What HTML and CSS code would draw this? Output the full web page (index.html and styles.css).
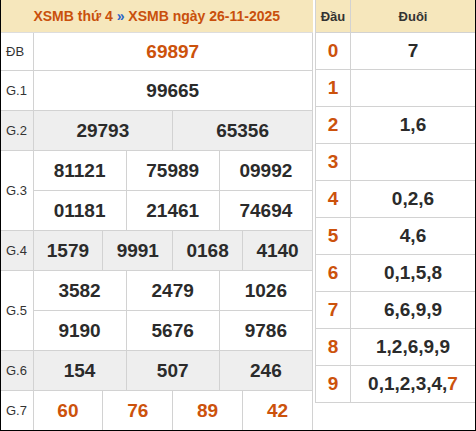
FILE: index.html
```html
<!DOCTYPE html>
<html>
<head>
<meta charset="utf-8">
<link rel="stylesheet" href="styles.css">
</head>
<body>
<div class="page">
  <table class="kq">
    <colgroup>
      <col class="c-label">
      <col><col><col><col><col><col><col><col><col><col><col><col>
    </colgroup>
    <tr class="head"><th colspan="13"><span class="t">XSMB thứ 4</span> <span class="sep">»</span> <span class="t">XSMB ngày 26-11-2025</span></th></tr>
    <tr class="r-db"><td class="lb">ĐB</td><td colspan="12" class="num red">69897</td></tr>
    <tr><td class="lb">G.1</td><td colspan="12" class="num">99665</td></tr>
    <tr class="gray"><td class="lb">G.2</td><td colspan="6" class="num">29793</td><td colspan="6" class="num">65356</td></tr>
    <tr><td class="lb" rowspan="2">G.3</td><td colspan="4" class="num">81121</td><td colspan="4" class="num">75989</td><td colspan="4" class="num">09992</td></tr>
    <tr><td colspan="4" class="num">01181</td><td colspan="4" class="num">21461</td><td colspan="4" class="num">74694</td></tr>
    <tr class="gray"><td class="lb">G.4</td><td colspan="3" class="num">1579</td><td colspan="3" class="num">9991</td><td colspan="3" class="num">0168</td><td colspan="3" class="num">4140</td></tr>
    <tr><td class="lb" rowspan="2">G.5</td><td colspan="4" class="num">3582</td><td colspan="4" class="num">2479</td><td colspan="4" class="num">1026</td></tr>
    <tr><td colspan="4" class="num">9190</td><td colspan="4" class="num">5676</td><td colspan="4" class="num">9786</td></tr>
    <tr class="gray"><td class="lb">G.6</td><td colspan="4" class="num">154</td><td colspan="4" class="num">507</td><td colspan="4" class="num">246</td></tr>
    <tr><td class="lb">G.7</td><td colspan="3" class="num red">60</td><td colspan="3" class="num red">76</td><td colspan="3" class="num red">89</td><td colspan="3" class="num red">42</td></tr>
  </table>
  <table class="loto">
    <colgroup><col class="c-dau"><col></colgroup>
    <tr class="head"><th>Đầu</th><th>Đuôi</th></tr>
    <tr><td class="dau">0</td><td class="duoi">7</td></tr>
    <tr><td class="dau">1</td><td class="duoi"></td></tr>
    <tr><td class="dau">2</td><td class="duoi">1,6</td></tr>
    <tr><td class="dau">3</td><td class="duoi"></td></tr>
    <tr><td class="dau">4</td><td class="duoi">0,2,6</td></tr>
    <tr><td class="dau">5</td><td class="duoi">4,6</td></tr>
    <tr><td class="dau">6</td><td class="duoi">0,1,5,8</td></tr>
    <tr><td class="dau">7</td><td class="duoi">6,6,9,9</td></tr>
    <tr><td class="dau">8</td><td class="duoi">1,2,6,9,9</td></tr>
    <tr><td class="dau">9</td><td class="duoi">0,1,2,3,4,<span class="hl">7</span></td></tr>
  </table>
</div>
</body>
</html>
```
FILE: styles.css
```css
html, body {
  margin: 0;
  padding: 0;
  background: #fff;
}
body {
  font-family: "Liberation Sans", Arial, sans-serif;
  color: #333;
}
.page {
  box-sizing: border-box;
  width: 476px;
  height: 431px;
  display: flex;
  align-items: flex-start;
  gap: 2px;
  border-left: 1px solid #000;
  border-right: 1px solid #000;
  border-bottom: 1px solid #000;
}
table {
  border-collapse: collapse;
  table-layout: fixed;
}
.kq {
  width: 312px;
}
.kq col.c-label {
  width: 32px;
}
.kq td, .kq th, .loto td, .loto th {
  padding: 0;
  text-align: center;
}
.kq td {
  border: 1px solid #d2d2d2;
  height: 39px;
}
.kq tr:last-child td {
  border-bottom: none;
}
.kq td:first-child, .kq tr.head th {
  border-left: none;
}
.kq tr.head th {
  height: 32px;
  background: #f6e7bc;
  border-bottom: 1px solid #ddd;
  font-size: 14px;
  font-weight: bold;
  color: #c9500c;
}
.kq .sep {
  color: #2a64c8;
}
.kq tr.r-db td {
  height: 37px;
}
.kq .lb {
  text-align: left;
  padding-left: 5px;
  font-size: 13px;
  color: #333;
}
.kq tr.gray td {
  background: #eee;
}
.num {
  font-size: 19px;
  font-weight: bold;
  color: #2b2b2b;
}
.num.red {
  color: #cc520c;
}
.loto {
  width: 160px;
}
.loto col.c-dau {
  width: 35px;
}
.loto th {
  height: 32px;
  background: #f6e7bc;
  font-size: 13px;
  font-weight: bold;
  color: #333;
  border: 1px solid #d2d2d2;
  border-top: none;
}
.loto td {
  height: 36px;
  border: 1px solid #d2d2d2;
}
.loto th:last-child, .loto td:last-child {
  border-right: none;
}
.dau {
  font-size: 19px;
  font-weight: bold;
  color: #cc520c;
}
.duoi {
  font-size: 19px;
  font-weight: bold;
  color: #2b2b2b;
}
.duoi .hl {
  color: #cc520c;
}
```
